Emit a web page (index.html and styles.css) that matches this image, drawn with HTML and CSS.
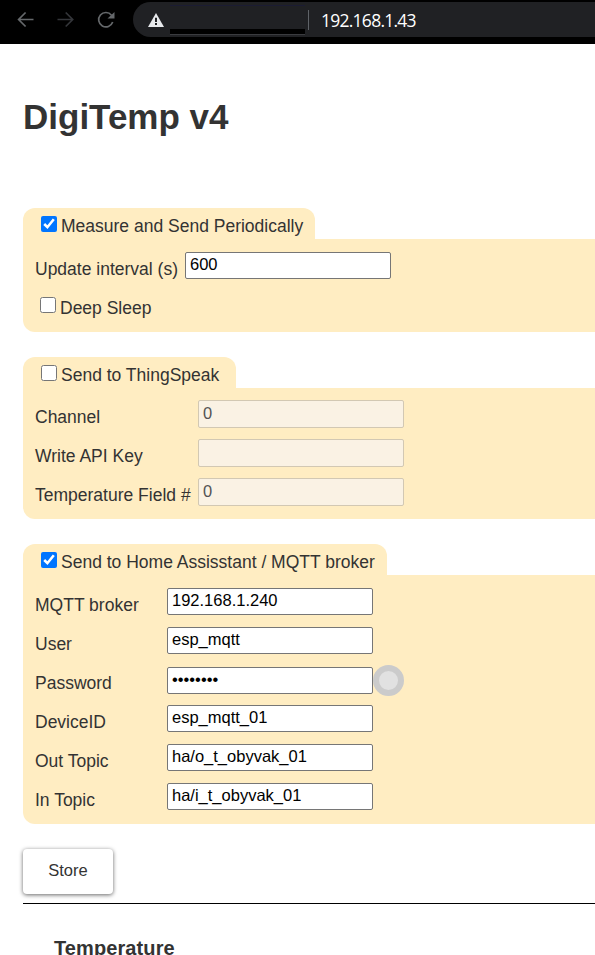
FILE: index.html
```html
<!DOCTYPE html>
<html lang="en">
<head>
<meta charset="utf-8">
<title>DigiTemp v4</title>
<link rel="stylesheet" href="styles.css">
</head>
<body>
<header class="browser">
  <svg class="nav" width="133" height="44" viewBox="0 0 133 44" fill="none" stroke-width="1.7">
    <path stroke="#65686b" d="M33.5 19.5H18.5M25.6 12.5L18.6 19.5L25.6 26.5"/>
    <path stroke="#34363a" d="M57.5 19.5H72.5M65.7 12.5L72.7 19.5L65.7 26.5"/>
    <path stroke="#65686b" d="M111.5 15.2A7.2 7.2 0 1 0 112.7 22"/>
    <path fill="#65686b" d="M114.5 12V18.5H107.5Z"/>
  </svg>
  <div class="omnibox">
    <svg class="warn" width="16" height="14" viewBox="0 0 16 14"><path fill="#e8eaed" d="M8 0L16 14H0Z"/><path fill="#202124" d="M7 4.7H9V9H7ZM7 10H9V12H7Z"/></svg>
    <span class="redacted"></span>
    <span class="divider"></span>
    <span class="address">192.168.1.43</span>
  </div>
</header>
<main>
  <h1>DigiTemp v4</h1>
  <section class="group">
    <label class="tab tab-measure"><input type="checkbox" checked><span>Measure and Send Periodically</span></label>
    <div class="panel panel-measure">
      <label class="row"><span>Update interval (s)</span><input class="field" type="text" value="600"></label>
      <label class="row check"><input type="checkbox"><span>Deep Sleep</span></label>
    </div>
  </section>
  <section class="group">
    <label class="tab tab-speak"><input type="checkbox"><span>Send to ThingSpeak</span></label>
    <div class="panel panel-speak">
      <label class="row"><span>Channel</span><input class="field" type="text" value="0" disabled></label>
      <label class="row"><span>Write API Key</span><input class="field" type="text" disabled></label>
      <label class="row"><span>Temperature Field #</span><input class="field" type="text" value="0" disabled></label>
    </div>
  </section>
  <section class="group">
    <label class="tab tab-mqtt"><input type="checkbox" checked><span>Send to Home Assisstant / MQTT broker</span></label>
    <div class="panel panel-mqtt">
      <label class="row"><span>MQTT broker</span><input class="field" type="text" value="192.168.1.240"></label>
      <label class="row"><span>User</span><input class="field" type="text" value="esp_mqtt"></label>
      <label class="row secret"><span>Password</span><input class="field" type="password" value="password"><i class="reveal"></i></label>
      <label class="row"><span>DeviceID</span><input class="field" type="text" value="esp_mqtt_01"></label>
      <label class="row"><span>Out Topic</span><input class="field" type="text" value="ha/o_t_obyvak_01"></label>
      <label class="row"><span>In Topic</span><input class="field" type="text" value="ha/i_t_obyvak_01"></label>
    </div>
  </section>
  <button class="store" type="button">Store</button>
  <hr>
  <h2>Temperature</h2>
</main>
</body>
</html>
```
FILE: styles.css
```css
* { box-sizing: border-box; }
html { overflow: hidden; }
body { margin: 0; height: 955px; overflow: hidden; background: #fff; color: #333; font: 17.5px/22px "Liberation Sans", Arial, sans-serif; }
.browser { display: flex; height: 44px; background: #000; }
.nav { flex: none; }
.omnibox { display: flex; flex: 1; height: 35px; margin-top: 2px; padding-left: 15px; background: #202124; border-radius: 18px 0 0 18px; }
.warn { flex: none; margin-top: 11px; }
.redacted { flex: none; width: 135px; height: 29px; margin: 3px 0 0 6px; border-top: 1px solid #1b1c33; border-bottom: 5px solid #000; box-shadow: 0 1px #3a3b3f; }
.divider { flex: none; width: 1px; height: 20px; margin: 8px 0 0 3px; background: #5f6368; }
.address { margin: 6px 0 0 12px; color: #fff; font: 17.5px/24px "Open Sans", "Noto Sans", sans-serif; letter-spacing: -.75px; white-space: nowrap; }
main { padding-left: 23px; }
h1 { margin: 53px 0 71px; font-size: 35px; line-height: 40px; }
.group { margin-bottom: 25px; }
.tab { display: flex; height: 31px; padding: 7px 0 0 18px; background: #ffedc2; border-radius: 12px 12px 0 0; white-space: nowrap; }
.tab-measure { width: 292px; }
.tab-speak { width: 213px; }
.tab-mqtt { width: 364px; }
input[type="checkbox"] { flex: none; width: 16px; height: 16px; margin: 1px 4px 0 0; }
.panel { padding: 8px 0 7px 12px; background: #ffedc2; border-radius: 0 0 0 12px; }
.panel-speak { padding-top: 7px; }
.row { display: grid; height: 39px; padding-top: 5px; align-items: start; white-space: nowrap; }
.row > span { padding-top: 6px; }
.panel-measure .row { grid-template-columns: 150px 206px; }
.panel-speak .row { grid-template-columns: 163px 206px; }
.panel-mqtt .row { grid-template-columns: 132px 206px 31px; }
.panel-measure .check { display: flex; padding-left: 5px; }
.check input[type="checkbox"] { margin-top: 6px; }
.field { width: 206px; height: 27px; padding: 0 4px 2px; border: 1px solid #767676; border-radius: 2px; background: #fff; color: #000; font: 16.5px/20px "Liberation Sans", Arial, sans-serif; }
.field:disabled { height: 28px; padding-bottom: 1px; border-color: #d2c8b3; background: #faf2e4; color: #545454; }
.secret .field { margin-top: 1px; }
.reveal { width: 31px; height: 31px; margin-top: -1px; border: 6px solid #cbcbcb; border-radius: 50%; background: #e1e1e1; }
.store { display: block; width: 90px; height: 45px; padding: 0 0 2px; border: 0; border-radius: 4px; background: #fff; color: #333; font: 16.5px "Liberation Sans", Arial, sans-serif; box-shadow: 0 1px 4px rgba(0, 0, 0, .6); }
hr { height: 1px; margin: 9px 0 0; border: 0; background: #000; }
h2 { margin: 32px 0 0 31px; font-size: 20px; line-height: 24px; letter-spacing: .1px; }
```
